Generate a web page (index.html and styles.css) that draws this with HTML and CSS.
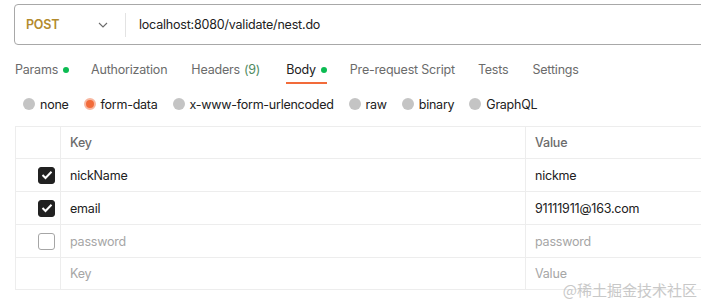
FILE: index.html
```html
<!DOCTYPE html>
<html>
<head>
<meta charset="utf-8">
<link rel="stylesheet" href="styles.css">
</head>
<body>
<div class="page">
  <div class="urlbar">
    <div class="method">POST</div>
    <svg class="chev" width="10" height="6" viewBox="0 0 10 6"><path d="M1 1 L5 5 L9 1" fill="none" stroke="#6b6b6b" stroke-width="1.1"/></svg>
    <div class="divider"></div>
    <div class="url">localhost:8080/validate/nest.do</div>
  </div>

  <div class="tabs">
    <div class="tab t-params">Params<span class="dot"></span></div>
    <div class="tab">Authorization</div>
    <div class="tab t-headers">Headers <span class="count">(9)</span></div>
    <div class="tab active">Body<span class="dot"></span></div>
    <div class="tab t-pre">Pre-request Script</div>
    <div class="tab">Tests</div>
    <div class="tab">Settings</div>
  </div>

  <div class="radios">
    <div class="radio"><span class="circle"></span>none</div>
    <div class="radio"><span class="circle on"></span>form-data</div>
    <div class="radio"><span class="circle"></span>x-www-form-urlencoded</div>
    <div class="radio"><span class="circle"></span>raw</div>
    <div class="radio"><span class="circle"></span>binary</div>
    <div class="radio"><span class="circle"></span>GraphQL</div>
  </div>

  <div class="table">
    <div class="row head">
      <div class="c0"></div>
      <div class="c1">Key</div>
      <div class="c2">Value</div>
    </div>
    <div class="row">
      <div class="c0"><span class="cb checked"><svg width="12" height="10" viewBox="0 0 12 10"><path d="M1.5 5 L4.5 8 L10.5 1.8" fill="none" stroke="#fff" stroke-width="2"/></svg></span></div>
      <div class="c1">nickName</div>
      <div class="c2">nickme</div>
    </div>
    <div class="row">
      <div class="c0"><span class="cb checked"><svg width="12" height="10" viewBox="0 0 12 10"><path d="M1.5 5 L4.5 8 L10.5 1.8" fill="none" stroke="#fff" stroke-width="2"/></svg></span></div>
      <div class="c1">email</div>
      <div class="c2">91111911@163.com</div>
    </div>
    <div class="row">
      <div class="c0"><span class="cb"></span></div>
      <div class="c1 muted">password</div>
      <div class="c2 muted">password</div>
    </div>
    <div class="row last">
      <div class="c0"></div>
      <div class="c1 muted">Key</div>
      <div class="c2 muted">Value</div>
    </div>
  </div>

  <div class="watermark">@稀土掘金技术社区</div>
</div>
</body>
</html>
```

FILE: styles.css
```css
html, body {
  margin: 0;
  padding: 0;
  background: #ffffff;
  overflow: hidden;
}
body {
  font-family: Inter, "Noto Sans", sans-serif;
  font-size: 12.5px;
  letter-spacing: -0.2px;
  color: #212121;
  width: 701px;
  height: 305px;
}
.page {
  position: relative;
  width: 701px;
  height: 305px;
  overflow: hidden;
}
.urlbar {
  margin: 4px 0 0 14px;
  width: 760px;
  height: 39px;
  border: 1px solid #a8a8a8;
  border-radius: 4px;
  display: flex;
  align-items: center;
}
.method {
  margin-left: 11px;
  font-weight: 600;
  color: #b38b2d;
  width: 62px;
}
.chev {
  margin-left: 10px;
}
.divider {
  margin-left: 17px;
  width: 1px;
  height: 24px;
  background: #e3e3e3;
}
.url {
  margin-left: 13px;
  color: #212121;
}
.tabs {
  display: flex;
  margin: 16px 0 0 15px;
  height: 24px;
  align-items: flex-start;
}
.tab {
  color: #6b6b6b;
  margin-right: 24px;
  padding-top: 1px;
  height: 20px;
  line-height: 16px;
  display: flex;
  align-items: flex-start;
}
.tab.t-params {
  margin-right: 22px;
}
.tab.t-headers {
  margin-right: 26px;
}
.tab.t-pre {
  margin-right: 23px;
}
.tab .dot {
  width: 6px;
  height: 6px;
  border-radius: 50%;
  background: #0cbb52;
  margin: 5px 0 0 5px;
}
.tab .count {
  color: #4f8a5f;
  margin-left: 4px;
}
.tab.active {
  color: #212121;
  border-bottom: 2px solid #f26b3a;
  margin-right: 23px;
}
.radios {
  display: flex;
  margin: 7px 0 0 23px;
  height: 24px;
  align-items: center;
  letter-spacing: -0.25px;
}
.radio {
  display: flex;
  align-items: center;
  margin-right: 15px;
  color: #212121;
}
.circle {
  width: 12px;
  height: 12px;
  border-radius: 50%;
  background: #c4c4c4;
  margin-right: 5px;
  box-sizing: border-box;
}
.circle.on {
  background: #f26b3a;
  border: 2px solid #f8b7a0;
}
.table {
  margin: 10px 0 0 15px;
  width: 760px;
  border: 1px solid #ededed;
  border-right: none;
}
.row {
  display: grid;
  grid-template-columns: 44px 466px 1fr;
  height: 33px;
  border-bottom: 1px solid #ededed;
  box-sizing: border-box;
}
.row.head {
  height: 32px;
}
.row.last {
  border-bottom: none;
  height: 31px;
}
.row > div {
  display: flex;
  align-items: center;
}
.c1 {
  border-left: 1px solid #ededed;
  border-right: 1px solid #ededed;
  padding-left: 9px;
}
.c2 {
  padding-left: 9px;
}
.head .c1, .head .c2 {
  color: #6b6b6b;
  font-weight: 500;
}
.muted {
  color: #a6a6a6;
}
.c0 {
  justify-content: flex-end;
  padding-right: 5px;
}
.cb {
  width: 17px;
  height: 17px;
  border-radius: 3px;
  box-sizing: border-box;
  border: 1px solid #a6a6a6;
  display: flex;
  align-items: center;
  justify-content: center;
}
.cb.checked {
  background: #212121;
  border-color: #212121;
}
.watermark {
  position: absolute;
  right: 4px;
  bottom: 5px;
  font-family: "Noto Sans CJK SC", sans-serif;
  font-size: 15px;
  letter-spacing: 0;
  color: #c8c8c8;
}
```
